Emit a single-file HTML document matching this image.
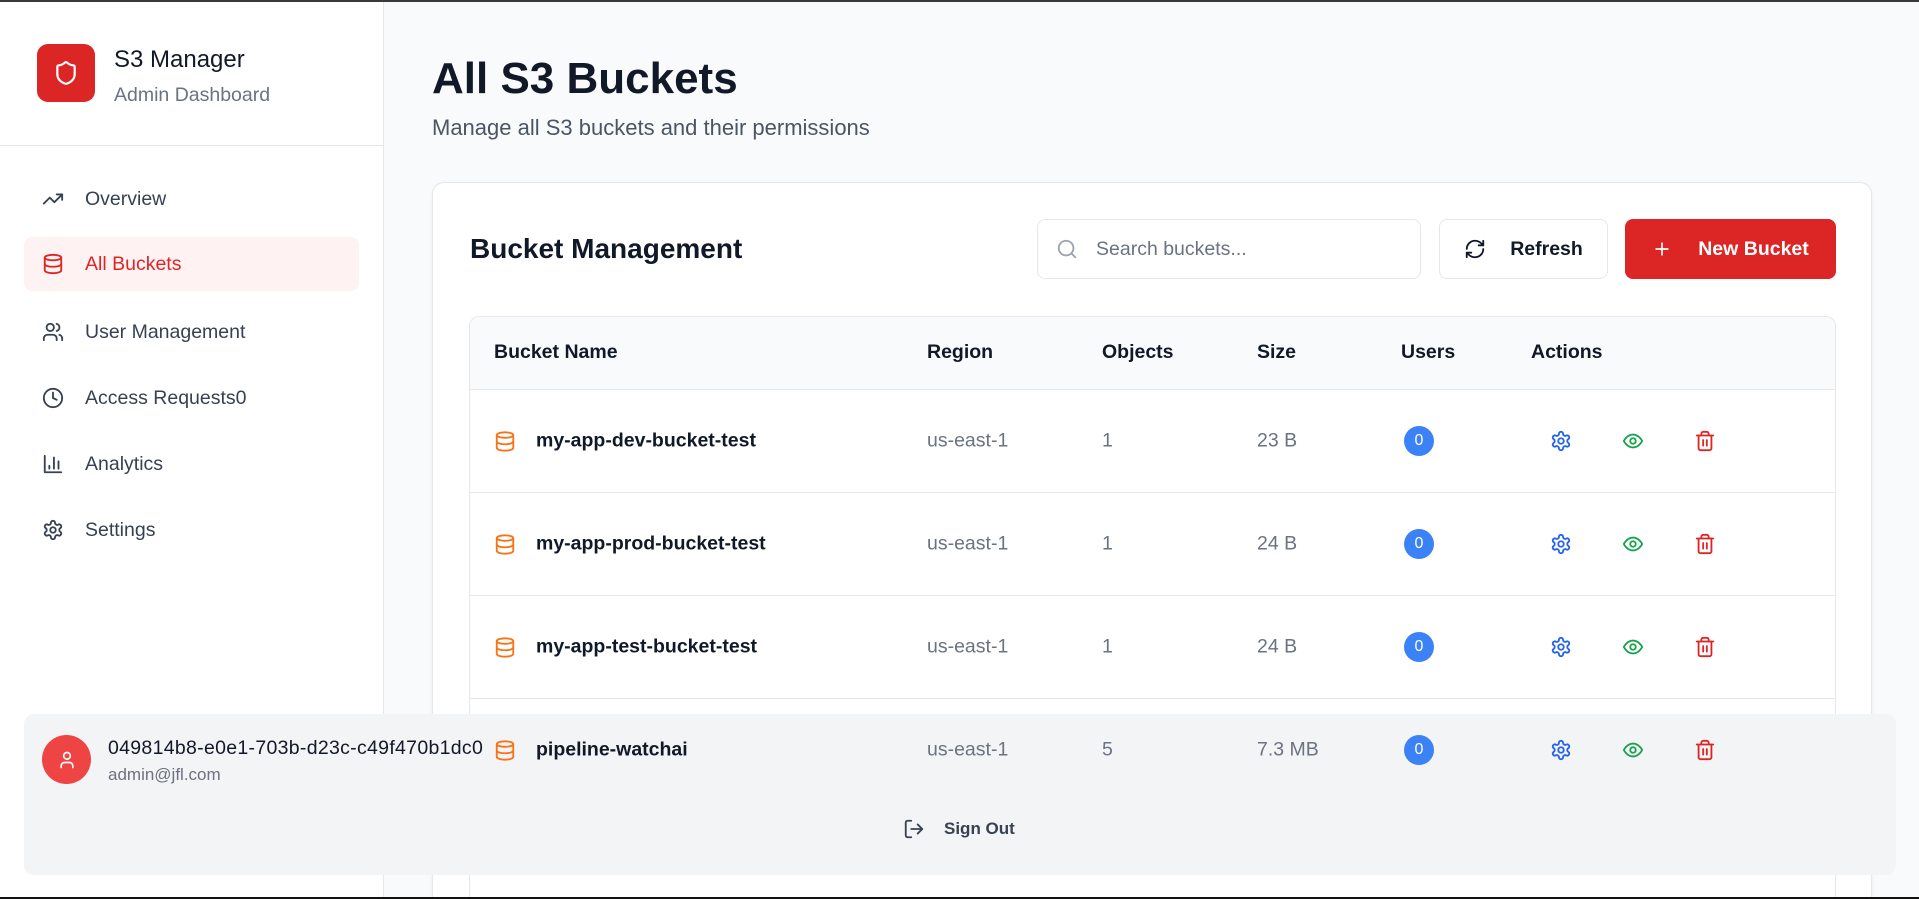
<!DOCTYPE html>
<html><head><meta charset="utf-8"><style>
*{box-sizing:border-box;margin:0;padding:0}
html,body{width:1919px;height:899px;overflow:hidden;font-family:"Liberation Sans",sans-serif;background:#f9fafb;color:#111827}
.wrap{position:relative;width:1919px;height:899px;overflow:hidden}
.abs{position:absolute}
svg{display:block}
.nav{position:absolute;left:24px;width:335px;height:54px;display:flex;align-items:center;padding-left:18px;font-size:19.5px;color:#374151}
.nav svg{margin-right:21px}
.th{position:absolute;top:341px;font-size:19.5px;font-weight:600;color:#111827}
.cell{position:absolute;font-size:19.5px;color:#6b7280;transform:translateY(-50%)}
.name{position:absolute;left:494px;display:flex;align-items:center;transform:translateY(-50%);font-size:19.5px;font-weight:600;color:#111827}
.name svg{margin-right:20px}
.badge{position:absolute;left:1404px;width:30px;height:30px;border-radius:50%;background:#3b82f6;color:#fff;font-size:16px;line-height:30px;text-align:center;transform:translateY(-50%)}
.ic{position:absolute;transform:translateY(-50%)}
.row{position:absolute;left:469px;width:1366px;height:1px;background:#e5e7eb}
</style></head><body><div class="wrap">
<div class="abs" style="left:0;top:0;width:1919px;height:2px;background:#3a3a3a;z-index:9"></div>
<div class="abs" style="left:0;top:897px;width:1919px;height:2px;background:#111;z-index:9"></div>

<div class="abs" style="left:0;top:0;width:384px;height:899px;background:#fff;border-right:1px solid #e5e7eb"></div>
<div class="abs" style="left:37px;top:44px;width:58px;height:58px;border-radius:11px;background:#dc2626;display:flex;align-items:center;justify-content:center">
<svg width="26" height="26" viewBox="0 0 24 24" fill="none" stroke="#fff" stroke-width="2" stroke-linecap="round" stroke-linejoin="round"><path d="M20 13c0 5-3.5 7.5-7.66 8.95a1 1 0 0 1-.67-.01C7.5 20.5 4 18 4 13V6a1 1 0 0 1 1-1c2 0 4.5-1.2 6.24-2.72a1.17 1.17 0 0 1 1.52 0C14.51 3.81 17 5 19 5a1 1 0 0 1 1 1z"/></svg></div>
<div class="abs" style="left:114px;top:46px;font-size:24px;font-weight:500;color:#111827">S3 Manager</div>
<div class="abs" style="left:114px;top:84px;font-size:19.5px;color:#6b7280">Admin Dashboard</div>
<div class="abs" style="left:0;top:145px;width:383px;height:1px;background:#e5e7eb"></div>

<div class="nav" style="top:172px"><svg width="22" height="22" viewBox="0 0 24 24" fill="none" stroke="#374151" stroke-width="2" stroke-linecap="round" stroke-linejoin="round"><path d="M22 7l-8.5 8.5-5-5L2 17"/><path d="M16 7h6v6"/></svg>Overview</div>
<div class="nav" style="top:237px;background:#fef2f2;border-radius:8px;color:#dc2626"><svg width="22" height="22" viewBox="0 0 24 24" fill="none" stroke="#dc2626" stroke-width="2" stroke-linecap="round" stroke-linejoin="round"><ellipse cx="12" cy="5" rx="9" ry="3"/><path d="M3 5v14a9 3 0 0 0 18 0V5"/><path d="M3 12a9 3 0 0 0 18 0"/></svg>All Buckets</div>
<div class="nav" style="top:305px"><svg width="22" height="22" viewBox="0 0 24 24" fill="none" stroke="#374151" stroke-width="2" stroke-linecap="round" stroke-linejoin="round"><path d="M16 21v-2a4 4 0 0 0-4-4H6a4 4 0 0 0-4 4v2"/><circle cx="9" cy="7" r="4"/><path d="M22 21v-2a4 4 0 0 0-3-3.87"/><path d="M16 3.13a4 4 0 0 1 0 7.75"/></svg>User Management</div>
<div class="nav" style="top:371px"><svg width="22" height="22" viewBox="0 0 24 24" fill="none" stroke="#374151" stroke-width="2" stroke-linecap="round" stroke-linejoin="round"><circle cx="12" cy="12" r="10"/><path d="M12 6v6l4 2"/></svg>Access Requests0</div>
<div class="nav" style="top:437px"><svg width="22" height="22" viewBox="0 0 24 24" fill="none" stroke="#374151" stroke-width="2" stroke-linecap="round" stroke-linejoin="round"><path d="M3 3v18h18"/><path d="M18 17V9"/><path d="M13 17V5"/><path d="M8 17v-3"/></svg>Analytics</div>
<div class="nav" style="top:503px"><svg width="22" height="22" viewBox="0 0 24 24" fill="none" stroke="#374151" stroke-width="2" stroke-linecap="round" stroke-linejoin="round"><path d="M12.22 2h-.44a2 2 0 0 0-2 2v.18a2 2 0 0 1-1 1.73l-.43.25a2 2 0 0 1-2 0l-.15-.08a2 2 0 0 0-2.730.73l-.22.38a2 2 0 0 0 .73 2.73l.15.1a2 2 0 0 1 1 1.72v.51a2 2 0 0 1-1 1.74l-.15.09a2 2 0 0 0-.73 2.73l.22.38a2 2 0 0 0 2.73.73l.15-.08a2 2 0 0 1 2 0l.43.25a2 2 0 0 1 1 1.73V20a2 2 0 0 0 2 2h.44a2 2 0 0 0 2-2v-.18a2 2 0 0 1 1-1.73l.43-.25a2 2 0 0 1 2 0l.15.08a2 2 0 0 0 2.73-.73l.22-.39a2 2 0 0 0-.73-2.73l-.15-.08a2 2 0 0 1-1-1.74v-.5a2 2 0 0 1 1-1.74l.15-.09a2 2 0 0 0 .73-2.730l-.22-.38a2 2 0 0 0-2.73-.73l-.15.08a2 2 0 0 1-2 0l-.43-.25a2 2 0 0 1-1-1.73V4a2 2 0 0 0-2-2z"/><circle cx="12" cy="12" r="3"/></svg>Settings</div>

<div class="abs" style="left:432px;top:54px;font-size:44px;font-weight:700;color:#111827">All S3 Buckets</div>
<div class="abs" style="left:432px;top:115px;font-size:22px;color:#4b5563">Manage all S3 buckets and their permissions</div>

<div class="abs" style="left:432px;top:182px;width:1440px;height:717px;background:#fff;border:1px solid #e5e7eb;border-bottom:none;border-radius:12px 12px 0 0;box-shadow:0 1px 3px rgba(0,0,0,.05)"></div>
<div class="abs" style="left:470px;top:233px;font-size:28px;font-weight:600;color:#111827">Bucket Management</div>
<div class="abs" style="left:1037px;top:219px;width:384px;height:60px;border:1px solid #e5e7eb;border-radius:8px;background:#fff;display:flex;align-items:center;padding-left:18px;font-size:19.5px;color:#6b7280">
<svg width="22" height="22" viewBox="0 0 24 24" fill="none" stroke="#9ca3af" stroke-width="2" stroke-linecap="round"><circle cx="11" cy="11" r="8"/><path d="M21 21l-4.3-4.3"/></svg><span style="margin-left:18px">Search buckets...</span></div>
<div class="abs" style="left:1439px;top:219px;width:169px;height:60px;border:1px solid #e5e7eb;border-radius:8px;background:#fff;display:flex;align-items:center;justify-content:center;font-size:19.5px;font-weight:600;color:#111827">
<svg width="22" height="22" viewBox="0 0 24 24" fill="none" stroke="#111827" stroke-width="2" stroke-linecap="round" stroke-linejoin="round"><path d="M3 12a9 9 0 0 1 9-9 9.75 9.75 0 0 1 6.74 2.74L21 8"/><path d="M21 3v5h-5"/><path d="M21 12a9 9 0 0 1-9 9 9.75 9.75 0 0 1-6.74-2.74L3 16"/><path d="M8 16H3v5"/></svg><span style="margin-left:24px">Refresh</span></div>
<div class="abs" style="left:1625px;top:219px;width:211px;height:60px;border-radius:8px;background:#dc2626;display:flex;align-items:center;justify-content:center;font-size:19.5px;font-weight:600;color:#fff">
<svg width="20" height="20" viewBox="0 0 24 24" fill="none" stroke="#fff" stroke-width="2" stroke-linecap="round"><path d="M5 12h14M12 5v14"/></svg><span style="margin-left:26px">New Bucket</span></div>

<div class="abs" style="left:469px;top:316px;width:1367px;height:583px;border:1px solid #e5e7eb;border-bottom:none;border-radius:10px 10px 0 0;background:#fff;overflow:hidden"><div style="height:73px;background:#f9fafb;border-bottom:1px solid #e5e7eb"></div></div>
<div class="th" style="left:494px">Bucket Name</div>
<div class="th" style="left:927px">Region</div>
<div class="th" style="left:1102px">Objects</div>
<div class="th" style="left:1257px">Size</div>
<div class="th" style="left:1401px">Users</div>
<div class="th" style="left:1531px">Actions</div>
<div class="row" style="top:492px"></div>
<div class="row" style="top:595px"></div>
<div class="row" style="top:698px"></div>

<div class="abs" style="left:24px;top:714px;width:1872px;height:161px;background:#f3f4f6;border-radius:10px;z-index:1"></div>
<div class="abs" style="left:42px;top:735px;width:49px;height:49px;border-radius:50%;background:#ef4444;display:flex;align-items:center;justify-content:center;z-index:2">
<svg width="20" height="20" viewBox="0 0 24 24" fill="none" stroke="#fff" stroke-width="2" stroke-linecap="round"><path d="M19 21v-2a4 4 0 0 0-4-4H9a4 4 0 0 0-4 4v2"/><circle cx="12" cy="7" r="4"/></svg></div>
<div class="abs" style="left:108px;top:737px;font-size:19.5px;font-weight:500;color:#111827;z-index:2;letter-spacing:.3px">049814b8-e0e1-703b-d23c-c49f470b1dc0</div>
<div class="abs" style="left:108px;top:765px;font-size:17px;color:#6b7280;z-index:2">admin@jfl.com</div>
<div class="abs" style="left:903px;top:818px;display:flex;align-items:center;font-size:17px;font-weight:600;color:#374151;z-index:2">
<svg width="22" height="22" viewBox="0 0 24 24" fill="none" stroke="#374151" stroke-width="2" stroke-linecap="round" stroke-linejoin="round"><path d="M9 21H5a2 2 0 0 1-2-2V5a2 2 0 0 1 2-2h4"/><path d="M16 17l5-5-5-5"/><path d="M21 12H9"/></svg><span style="margin-left:19px">Sign Out</span></div>

<div style="position:relative;z-index:3">
<div class="name" style="top:441px"><svg width="22" height="22" viewBox="0 0 24 24" fill="none" stroke="#f97316" stroke-width="2"><ellipse cx="12" cy="5" rx="9" ry="3"/><path d="M3 5v14a9 3 0 0 0 18 0V5"/><path d="M3 12a9 3 0 0 0 18 0"/></svg>my-app-dev-bucket-test</div>
<div class="cell" style="left:927px;top:441px">us-east-1</div><div class="cell" style="left:1102px;top:441px">1</div><div class="cell" style="left:1257px;top:441px">23 B</div>
<div class="badge" style="top:441px">0</div>

<div class="name" style="top:544px"><svg width="22" height="22" viewBox="0 0 24 24" fill="none" stroke="#f97316" stroke-width="2"><ellipse cx="12" cy="5" rx="9" ry="3"/><path d="M3 5v14a9 3 0 0 0 18 0V5"/><path d="M3 12a9 3 0 0 0 18 0"/></svg>my-app-prod-bucket-test</div>
<div class="cell" style="left:927px;top:544px">us-east-1</div><div class="cell" style="left:1102px;top:544px">1</div><div class="cell" style="left:1257px;top:544px">24 B</div>
<div class="badge" style="top:544px">0</div>

<div class="name" style="top:647px"><svg width="22" height="22" viewBox="0 0 24 24" fill="none" stroke="#f97316" stroke-width="2"><ellipse cx="12" cy="5" rx="9" ry="3"/><path d="M3 5v14a9 3 0 0 0 18 0V5"/><path d="M3 12a9 3 0 0 0 18 0"/></svg>my-app-test-bucket-test</div>
<div class="cell" style="left:927px;top:647px">us-east-1</div><div class="cell" style="left:1102px;top:647px">1</div><div class="cell" style="left:1257px;top:647px">24 B</div>
<div class="badge" style="top:647px">0</div>

<div class="name" style="top:750px"><svg width="22" height="22" viewBox="0 0 24 24" fill="none" stroke="#f97316" stroke-width="2"><ellipse cx="12" cy="5" rx="9" ry="3"/><path d="M3 5v14a9 3 0 0 0 18 0V5"/><path d="M3 12a9 3 0 0 0 18 0"/></svg>pipeline-watchai</div>
<div class="cell" style="left:927px;top:750px">us-east-1</div><div class="cell" style="left:1102px;top:750px">5</div><div class="cell" style="left:1257px;top:750px">7.3 MB</div>
<div class="badge" style="top:750px">0</div>
</div>

<svg width="0" height="0" style="position:absolute"><defs>
<symbol id="gear" viewBox="0 0 24 24"><path fill="none" stroke="#2563eb" stroke-width="2" stroke-linejoin="round" d="M12.22 2h-.44a2 2 0 0 0-2 2v.18a2 2 0 0 1-1 1.73l-.43.25a2 2 0 0 1-2 0l-.15-.08a2 2 0 0 0-2.73.73l-.22.38a2 2 0 0 0 .73 2.73l.15.1a2 2 0 0 1 1 1.72v.51a2 2 0 0 1-1 1.74l-.15.09a2 2 0 0 0-.73 2.73l.22.38a2 2 0 0 0 2.73.73l.15-.08a2 2 0 0 1 2 0l.43.25a2 2 0 0 1 1 1.73V20a2 2 0 0 0 2 2h.44a2 2 0 0 0 2-2v-.18a2 2 0 0 1 1-1.73l.43-.25a2 2 0 0 1 2 0l.15.08a2 2 0 0 0 2.73-.73l.22-.39a2 2 0 0 0-.73-2.73l-.15-.08a2 2 0 0 1-1-1.74v-.5a2 2 0 0 1 1-1.74l.15-.09a2 2 0 0 0 .73-2.73l-.22-.38a2 2 0 0 0-2.73-.73l-.15.08a2 2 0 0 1-2 0l-.43-.25a2 2 0 0 1-1-1.73V4a2 2 0 0 0-2-2z"/><circle cx="12" cy="12" r="3" fill="none" stroke="#2563eb" stroke-width="2"/></symbol>
<symbol id="eye" viewBox="0 0 24 24"><path fill="none" stroke="#16a34a" stroke-width="2" d="M2 12s3.5-7 10-7 10 7 10 7-3.5 7-10 7S2 12 2 12z"/><circle cx="12" cy="12" r="3" fill="none" stroke="#16a34a" stroke-width="2"/></symbol>
<symbol id="trash" viewBox="0 0 24 24"><g fill="none" stroke="#dc2626" stroke-width="2" stroke-linecap="round"><path d="M3 6h18"/><path d="M19 6v14a2 2 0 0 1-2 2H7a2 2 0 0 1-2-2V6"/><path d="M8 6V4a2 2 0 0 1 2-2h4a2 2 0 0 1 2 2v2"/><path d="M10 11v6M14 11v6"/></g></symbol>
</defs></svg>
<div style="position:relative;z-index:3">
<svg class="ic" style="left:1550px;top:441px" width="22" height="22"><use href="#gear"/></svg>
<svg class="ic" style="left:1622px;top:441px" width="22" height="22"><use href="#eye"/></svg>
<svg class="ic" style="left:1694px;top:441px" width="22" height="22"><use href="#trash"/></svg>
<svg class="ic" style="left:1550px;top:544px" width="22" height="22"><use href="#gear"/></svg>
<svg class="ic" style="left:1622px;top:544px" width="22" height="22"><use href="#eye"/></svg>
<svg class="ic" style="left:1694px;top:544px" width="22" height="22"><use href="#trash"/></svg>
<svg class="ic" style="left:1550px;top:647px" width="22" height="22"><use href="#gear"/></svg>
<svg class="ic" style="left:1622px;top:647px" width="22" height="22"><use href="#eye"/></svg>
<svg class="ic" style="left:1694px;top:647px" width="22" height="22"><use href="#trash"/></svg>
<svg class="ic" style="left:1550px;top:750px" width="22" height="22"><use href="#gear"/></svg>
<svg class="ic" style="left:1622px;top:750px" width="22" height="22"><use href="#eye"/></svg>
<svg class="ic" style="left:1694px;top:750px" width="22" height="22"><use href="#trash"/></svg>
</div>
</div></body></html>
